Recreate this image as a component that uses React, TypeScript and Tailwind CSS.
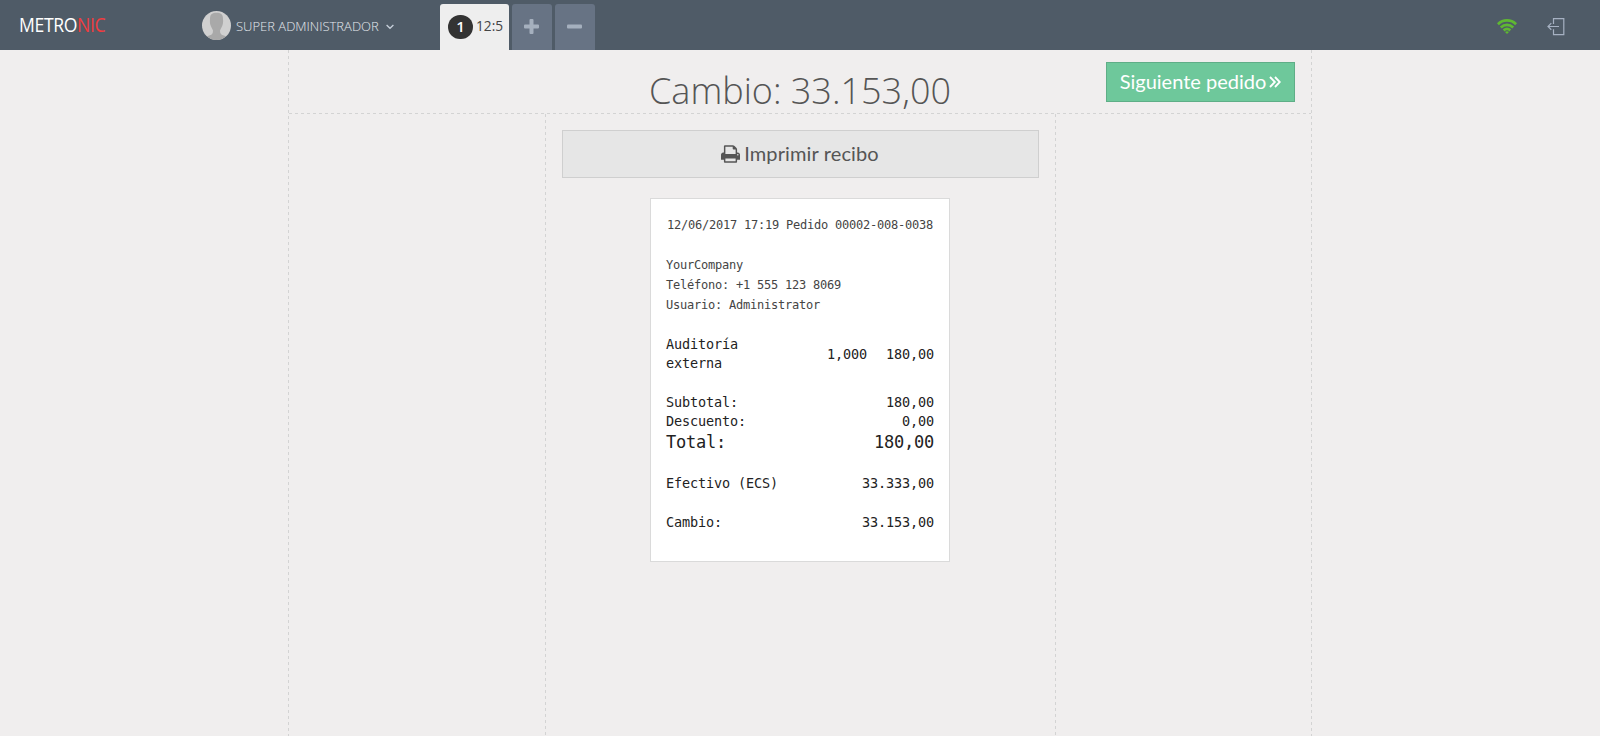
import type { ReactNode } from 'react';

function Logo() {
  return (
    <div className="flex h-[20px] w-[110px] origin-left scale-x-[0.88] whitespace-nowrap font-['Open_Sans',sans-serif] text-[20px] leading-[20px] tracking-[-0.4px]">
      <span className="text-white">METRO<span className="text-[#f03b3f]">NIC</span></span>
    </div>
  );
}

function Avatar() {
  return (
    <svg width="29" height="29" viewBox="0 0 29 29">
      <defs>
        <clipPath id="avatar"><circle cx="14.5" cy="14.5" r="14.5" /></clipPath>
      </defs>
      <g clipPath="url(#avatar)">
        <rect width="29" height="29" fill="#d0d0d0" />
        <path d="M8 8C8 3 10.500 1.800 14.500 1.800S21 3 21 8c.3 3 0 5-.8 7-.5 1.500-1.700 3-2.200 4.500 0 3 1 4 3 4.800 2 .7 4 1.200 5 2.200V29H3v-2.500c1-1 3-1.500 5-2.200 2-.8 3-1.800 3-4.800C10.500 18 9.300 16.500 8.800 15 8 13 7.700 11 8 8z" fill="#a9a9a9" />
      </g>
    </svg>
  );
}

function AngleDown() {
  return (
    <svg className="ml-[7px] mt-[13px]" width="8" height="6" viewBox="0 0 8 6" fill="none" stroke="#c6cfda" strokeWidth="1.3">
      <path d="M.6 1 4 4.300 7.400 1" />
    </svg>
  );
}

function AngleDoubleRight() {
  return (
    <svg className="mt-[2px]" width="12" height="12" viewBox="0 0 12 12" fill="none" stroke="#fff" strokeWidth="1.900">
      <path d="m1 1 4.800 5L1 11M6 1l4.800 5L6 11" />
    </svg>
  );
}

function WifiIcon() {
  return (
    <svg width="20" height="15" viewBox="0 0 20 15" fill="none" stroke="#5fb832" strokeWidth="2.700">
      <path d="M.9 5.200C6 .2 14 .2 19.100 5.200M3.800 8.500c3.600-3.400 8.800-3.400 12.400 0M6.600 11.400c2-1.700 4.800-1.700 6.800 0" />
      <path d="M8 13q2-1.400 4 0l-2 2z" fill="#5fb832" stroke="none" />
    </svg>
  );
}

function LogoutIcon() {
  return (
    <svg width="18" height="18" viewBox="0 0 18 18" fill="none" stroke="#a6b1c2" strokeWidth="1.200">
      <path d="M6.500 6V.7h10.300v16H6.500v-5.400M12 8.500H.8M4.300 5.200 1 8.500l3.300 3.200" />
    </svg>
  );
}

function PrintIcon() {
  return (
    <svg className="mt-px" width="19" height="18" viewBox="0 0 1664 1536" fill="#555">
      <path d="M384 1408h896v-256H384v256zm0-640h896V384h-160q-40 0-68-28t-28-68V128H384v640zm1152 64q0-26-19-45t-45-19-45 19-19 45 19 45 45 19 45-19 19-45zm128 0v416q0 13-9.500 22.500t-22.500 9.500h-224v160q0 40-28 68t-68 28H352q-40 0-68-28t-28-68v-160H32q-13 0-22.500-9.500T0 1248V832q0-79 56.500-135.500T192 640h64V96q0-40 28-68t68-28h672q40 0 88 20t76 48l152 152q28 28 48 76t20 88v256h64q79 0 135.500 56.500T1664 832z" />
    </svg>
  );
}

function TabButton({ children }: { children: ReactNode }) {
  return (
    <button className="flex w-[40px] justify-center rounded-t-[3px] bg-[#677384] pr-px pt-[15px]">
      <svg width="15" height="15" viewBox="0 0 15 15" fill="#a5b0be">{children}</svg>
    </button>
  );
}

function Header() {
  return (
    <header className="flex h-[50px] shrink-0 bg-[#4f5b67]">
      <div className="w-[202px] pl-[18.500px] pt-[15px]">
        <Logo />
      </div>
      <div className="flex w-[238px] pt-[11px]">
        <Avatar />
        <span className="ml-[5px] mt-[6px] whitespace-nowrap font-['Open_Sans',sans-serif] text-[13px] font-light leading-[18px] text-[#e4e8ed]">
          SUPER ADMINISTRADOR
        </span>
        <AngleDown />
      </div>
      <div className="flex gap-[3px] pt-[4px]">
        <div className="flex w-[69px] rounded-t-[3px] bg-[#eeeeee] pl-[8px] pt-[11px]">
          <span className="flex h-[24px] w-[25px] items-center justify-center rounded-full bg-[#333] pb-px font-['Open_Sans',sans-serif] text-[15px] font-semibold text-white">
            1
          </span>
          <span className="ml-[3px] font-['Open_Sans',sans-serif] text-[13.700px] font-medium leading-[22px] text-[#444]">12:5</span>
        </div>
        <TabButton>
          <path d="M5.500 1q0-1 1-1h2q1 0 1 1v4.500H14q1 0 1 1v2q0 1-1 1H9.500V14q0 1-1 1h-2q-1 0-1-1V9.500H1q-1 0-1-1v-2q0-1 1-1h4.500z" />
        </TabButton>
        <TabButton>
          <rect y="5.500" width="15" height="4" rx="1" />
        </TabButton>
      </div>
      <div className="ml-auto flex gap-[30px] pr-[35px]">
        <div className="pt-[19px]"><WifiIcon /></div>
        <div className="pt-[18px]"><LogoutIcon /></div>
      </div>
    </header>
  );
}

function VerticalDash() {
  return <div className="w-px shrink-0 bg-[repeating-linear-gradient(to_bottom,#d3d3d3_0px_3px,transparent_3px_6px)]" />;
}

function HorizontalDash() {
  return <div className="h-px shrink-0 bg-[repeating-linear-gradient(to_right,#d3d3d3_0px_3px,transparent_3px_6px)]" />;
}

function Row({ label, value }: { label: string; value: string }) {
  return (
    <div className="flex justify-between">
      <span>{label}</span>
      <span>{value}</span>
    </div>
  );
}

function Receipt() {
  return (
    <section className="mx-auto mt-[20px] h-[364px] w-[300px] whitespace-nowrap border border-[#dadada] bg-white px-[15px] pt-[16px] font-['DejaVu_Sans_Mono',monospace] text-[#222]">
      <div className="text-[12px] leading-[20px] tracking-[-0.224px] text-[#444]">
        <p className="text-center">12/06/2017 17:19 Pedido 00002-008-0038</p>
        <p className="mt-[20px]">YourCompany</p>
        <p>Teléfono: +1 555 123 8069</p>
        <p>Usuario: Administrator</p>
      </div>
      <div className="mt-[20px] text-[13.500px] leading-[19px] tracking-[-0.128px]">
        <div className="flex items-center">
          <span className="w-[134px] whitespace-normal">Auditoría externa</span>
          <span className="w-[67px] text-right">1,000</span>
          <span className="w-[67px] text-right">180,00</span>
        </div>
        <div className="mt-[20px]">
          <Row label="Subtotal:" value="180,00" />
          <Row label="Descuento:" value="0,00" />
          <div className="text-[17px] leading-[23px] tracking-[-0.235px]">
            <Row label="Total:" value="180,00" />
          </div>
        </div>
        <div className="mt-[20px]">
          <Row label="Efectivo (ECS)" value="33.333,00" />
        </div>
        <div className="mt-[20px]">
          <Row label="Cambio:" value="33.153,00" />
        </div>
      </div>
    </section>
  );
}

export default function App() {
  return (
    <div className="flex h-[736px] w-[1600px] flex-col overflow-hidden bg-[#f0eeee]">
      <Header />
      <main className="mx-auto flex w-[1024px] flex-1">
        <VerticalDash />
        <div className="flex flex-1 flex-col">
          <div className="grid h-[63px] shrink-0 grid-cols-[256px_1fr_256px]">
            <h1 className="col-start-2 whitespace-nowrap pt-[16px] text-center font-['Open_Sans',sans-serif] text-[36px] font-light leading-[50px] text-[#555]">
              Cambio: 33.153,00
            </h1>
            <button className="mr-[16px] mt-[12px] flex h-[40px] w-[189px] items-center justify-center gap-[3px] justify-self-end whitespace-nowrap border border-[#5fae87] bg-[#6ec89b] pb-[2px] font-['Lato',sans-serif] text-[20px] text-white">
              Siguiente pedido
              <AngleDoubleRight />
            </button>
          </div>
          <HorizontalDash />
          <div className="mx-auto flex w-[511px] flex-1">
            <VerticalDash />
            <div className="flex-1 px-[16px] pt-[16px]">
              <button className="flex h-[48px] w-full items-center justify-center gap-[4px] border border-[#cfcfcf] bg-[#e6e6e6] pb-[2px] font-['Lato',sans-serif] text-[20px] tracking-[0.12px] text-[#555]">
                <PrintIcon />
                Imprimir recibo
              </button>
              <Receipt />
            </div>
            <VerticalDash />
          </div>
        </div>
        <VerticalDash />
      </main>
    </div>
  );
}
